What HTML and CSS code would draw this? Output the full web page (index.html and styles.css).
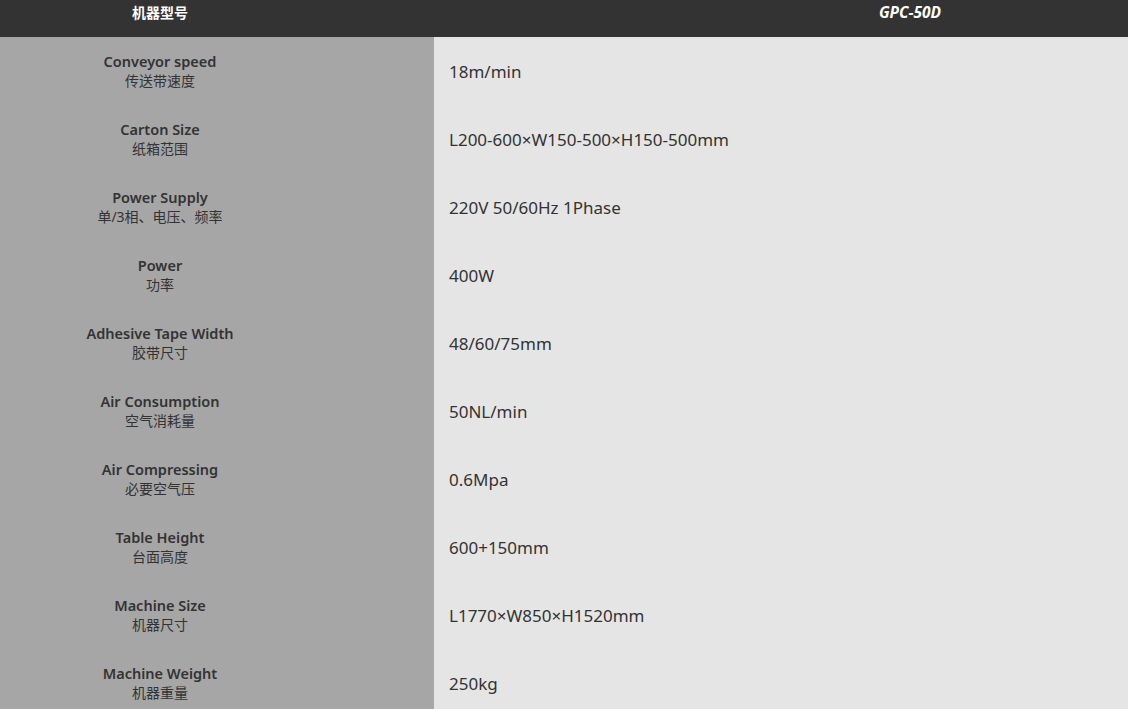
FILE: index.html
```html
<!DOCTYPE html>
<html lang="en">
  <head>
    <title>GPC-50D</title>
    <link rel="stylesheet" href="styles.css">
  </head>
  <body>
    <table class="spec-table">
      <thead>
        <tr>
          <th class="label-col">机器型号</th>
          <th class="value-col"><em>GPC-50D</em></th>
        </tr>
      </thead>
      <tbody>
        <tr>
          <td class="label-col"><span class="en">Conveyor speed</span><span class="zh">传送带速度</span></td>
          <td class="value-col">18m/min</td>
        </tr>
        <tr>
          <td class="label-col"><span class="en">Carton Size</span><span class="zh">纸箱范围</span></td>
          <td class="value-col">L200-600×W150-500×H150-500mm</td>
        </tr>
        <tr>
          <td class="label-col"><span class="en">Power Supply</span><span class="zh">单/3相、电压、频率</span></td>
          <td class="value-col">220V 50/60Hz 1Phase</td>
        </tr>
        <tr>
          <td class="label-col"><span class="en">Power</span><span class="zh">功率</span></td>
          <td class="value-col">400W</td>
        </tr>
        <tr>
          <td class="label-col"><span class="en">Adhesive Tape Width</span><span class="zh">胶带尺寸</span></td>
          <td class="value-col">48/60/75mm</td>
        </tr>
        <tr>
          <td class="label-col"><span class="en">Air Consumption</span><span class="zh">空气消耗量</span></td>
          <td class="value-col">50NL/min</td>
        </tr>
        <tr>
          <td class="label-col"><span class="en">Air Compressing</span><span class="zh">必要空气压</span></td>
          <td class="value-col">0.6Mpa</td>
        </tr>
        <tr>
          <td class="label-col"><span class="en">Table Height</span><span class="zh">台面高度</span></td>
          <td class="value-col">600+150mm</td>
        </tr>
        <tr>
          <td class="label-col"><span class="en">Machine Size</span><span class="zh">机器尺寸</span></td>
          <td class="value-col">L1770×W850×H1520mm</td>
        </tr>
        <tr>
          <td class="label-col"><span class="en">Machine Weight</span><span class="zh">机器重量</span></td>
          <td class="value-col">250kg</td>
        </tr>
      </tbody>
    </table>
  </body>
</html>
```

FILE: styles.css
```css
html, body {
  margin: 0;
  padding: 0;
  overflow: hidden;
}

body {
  font-family: "Noto Sans", "Noto Sans CJK SC", sans-serif;
  color: #333;
  background: #e5e5e5;
}

.spec-table {
  border-collapse: collapse;
  table-layout: fixed;
  width: 1386px;
}

.spec-table th {
  background: #333333;
  color: #fff;
  height: 25px;
  padding: 0 0 12px 0;
  font-size: 14px;
  line-height: 19px;
  font-weight: 700;
  text-align: center;
  vertical-align: middle;
}

.spec-table th em {
  font-style: italic;
  font-size: 15.5px;
}

.spec-table th.label-col {
  padding-right: 114px;
}

.label-col {
  width: 434px;
  box-sizing: border-box;
}

.spec-table td {
  height: 68px;
  padding: 0;
  vertical-align: middle;
}

.spec-table td.label-col {
  background: #a6a6a6;
  text-align: center;
  padding-right: 114px;
}

.spec-table td.value-col {
  background: #e5e5e5;
  padding-left: 15px;
  font-size: 17px;
}

.en {
  display: block;
  font-size: 14.5px;
  font-weight: 600;
  line-height: 19px;
}

.zh {
  display: block;
  font-size: 14px;
  line-height: 19px;
}
```
